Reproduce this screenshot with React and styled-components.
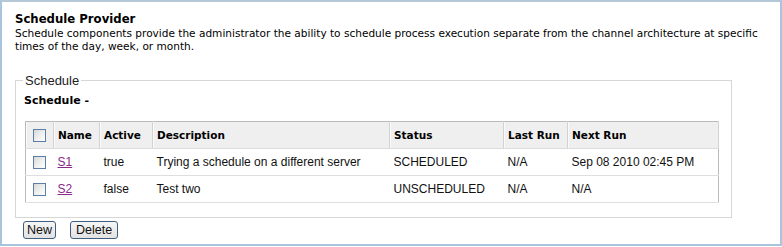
import React from "react";
import styled, { createGlobalStyle } from "styled-components";

const Global = createGlobalStyle`
  html, body { margin: 0; padding: 0; background: #fff; }
  body { font-family: "DejaVu Sans", sans-serif; color: #000; }
`;

const tahoma = `"DejaVu Sans", Verdana, sans-serif`;
const arial = `"Liberation Sans", Arial, sans-serif`;

const Panel = styled.div`
  box-sizing: border-box;
  width: 782px;
  height: 246px;
  border: 2px solid #a9c5de;
  border-top-color: #b4c8d8;
  padding: 10px 13px 0 13px;
  display: flex;
  flex-direction: column;
`;

const Title = styled.h1`
  margin: 0;
  font-family: ${tahoma};
  font-size: 11.7px;
  font-weight: bold;
  line-height: 15px;
`;

const Description = styled.p`
  margin: 0;
  font-family: ${tahoma};
  font-size: 10.55px;
  line-height: 13px;
  width: 758px;
`;

const Fieldset = styled.fieldset`
  box-sizing: border-box;
  margin: 20px 0 0 0;
  width: 717px;
  height: 145px;
  border: 1px solid #d6d6d6;
  padding: 2px 11px 0 8px;
  min-width: 0;
`;

const Legend = styled.legend`
  font-family: ${arial};
  font-size: 13px;
  padding: 0 2px;
  margin-left: -1px;
  color: #222;
`;

const SubTitle = styled.div`
  font-family: ${tahoma};
  font-size: 11px;
  font-weight: bold;
  line-height: 13px;
  margin-top: 4px;
`;

const Table = styled.table`
  margin-top: 14px;
  margin-left: 1px;
  width: 694px;
  border-collapse: collapse;
  table-layout: fixed;
  border: 1px solid #bdb9b9;
  border-bottom-color: #b9c4b4;
`;

const HeadCell = styled.th`
  height: 26px;
  padding: 0 4px;
  background: #efefef;
  text-align: ${(p) => (p.$center ? "center" : "left")};
  font-family: ${tahoma};
  font-size: 10.5px;
  font-weight: bold;
  border-right: 1px solid #d2d2d2;
  box-shadow: inset 1px 0 0 #fafafa;
  border-bottom: 1px solid #dcdcdc;
  vertical-align: middle;
  white-space: nowrap;
`;

const Cell = styled.td`
  height: 26px;
  padding: 0 4px;
  font-family: ${arial};
  font-size: 12px;
  color: #111;
  text-align: ${(p) => (p.$center ? "center" : "left")};
  border-bottom: 1px solid #dedede;
  vertical-align: middle;
  white-space: nowrap;
`;

const NameLink = styled.a`
  color: #8b2a8b;
  text-decoration: underline;
`;

const Check = styled.input.attrs({ type: "checkbox" })`
  appearance: none;
  -webkit-appearance: none;
  box-sizing: border-box;
  width: 13px;
  height: 13px;
  margin: 0;
  vertical-align: middle;
  border: 1px solid #5b7fa6;
  background: linear-gradient(135deg, #d8d8d8 0%, #f0f0f0 55%, #ffffff 100%);
`;

const ButtonBar = styled.div`
  display: flex;
  gap: 14px;
  margin: 3px 0 0 8px;
`;

const Button = styled.button`
  box-sizing: border-box;
  height: 18px;
  padding: 0 ${(p) => p.$pad || 4}px;
  font-family: ${arial};
  font-size: 12.5px;
  line-height: 14px;
  color: #111;
  border: 1px solid #3e5f80;
  border-radius: 3px;
  background: linear-gradient(#f6f6f6, #e2e2e2);
`;

const rows = [
  { name: "S1", active: "true", desc: "Trying a schedule on a different server", status: "SCHEDULED", last: "N/A", next: "Sep 08 2010 02:45 PM" },
  { name: "S2", active: "false", desc: "Test two", status: "UNSCHEDULED", last: "N/A", next: "N/A" },
];

export default function App() {
  return (
    <>
      <Global />
      <Panel>
        <Title>Schedule Provider</Title>
        <Description>
          Schedule components provide the administrator the ability to schedule process execution separate from the channel architecture at specific times of the day, week, or month.
        </Description>
        <Fieldset>
          <Legend>Schedule</Legend>
          <SubTitle>Schedule -</SubTitle>
          <Table>
            <colgroup>
              <col style={{ width: 28 }} />
              <col style={{ width: 46 }} />
              <col style={{ width: 53 }} />
              <col style={{ width: 237 }} />
              <col style={{ width: 114 }} />
              <col style={{ width: 64 }} />
              <col />
            </colgroup>
            <thead>
              <tr>
                <HeadCell $center><Check /></HeadCell>
                <HeadCell>Name</HeadCell>
                <HeadCell>Active</HeadCell>
                <HeadCell>Description</HeadCell>
                <HeadCell>Status</HeadCell>
                <HeadCell>Last Run</HeadCell>
                <HeadCell>Next Run</HeadCell>
              </tr>
            </thead>
            <tbody>
              {rows.map((r) => (
                <tr key={r.name}>
                  <Cell $center><Check /></Cell>
                  <Cell><NameLink href="#">{r.name}</NameLink></Cell>
                  <Cell>{r.active}</Cell>
                  <Cell>{r.desc}</Cell>
                  <Cell>{r.status}</Cell>
                  <Cell>{r.last}</Cell>
                  <Cell>{r.next}</Cell>
                </tr>
              ))}
            </tbody>
          </Table>
        </Fieldset>
        <ButtonBar>
          <Button $pad={3}>New</Button>
          <Button $pad={5}>Delete</Button>
        </ButtonBar>
      </Panel>
    </>
  );
}
